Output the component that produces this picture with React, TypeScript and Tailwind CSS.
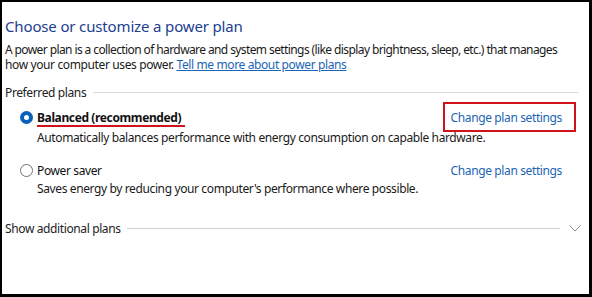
function Radio({ checked }: { checked?: boolean }) {
  if (checked) {
    return (
      <span className="flex h-[13px] w-[13px] shrink-0 items-center justify-center rounded-full bg-[#0a5fb8]">
        <span className="h-[5px] w-[5px] rounded-full bg-white" />
      </span>
    );
  }
  return <span className="h-[13px] w-[13px] shrink-0 rounded-full border border-[#707070] bg-white" />;
}

function Plan({
  name,
  desc,
  checked,
  highlight,
}: {
  name: string;
  desc: string;
  checked?: boolean;
  highlight?: boolean;
}) {
  return (
    <div className="flex flex-col">
      <div className="flex h-[22px] items-center pl-[15px] pr-[27px]">
        <Radio checked={checked} />
        <span className="relative ml-[4px] flex-1">
          <span className={checked ? "font-bold text-[#111]" : "text-[#111]"}>{name}</span>
          {highlight && (
            <span className="absolute left-0 top-[15px] h-[2px] w-[148px] bg-[#d0121b]" />
          )}
        </span>
        <span className="relative text-[#1b64b5]">
          Change plan settings
          {highlight && (
            <span className="absolute -bottom-[7px] -left-[8px] -right-[14px] -top-[8px] border-2 border-[#d0121b]" />
          )}
        </span>
      </div>
      <p className={checked ? "mt-[2px] pl-[32px] text-[#1a1a1a]" : "pl-[32px] text-[#1a1a1a]"}>{desc}</p>
    </div>
  );
}

export default function App() {
  return (
    <div
      className="h-[297px] w-[592px] border-b-[3px] border-l-2 border-r-[3px] border-t-2 border-black bg-white pl-[3px] text-[12px] leading-[15px] tracking-[-0.38px] text-[#1a1a1a]"
      style={{ fontFamily: '"Noto Sans", "Open Sans", sans-serif' }}
    >
      <h1 className="mt-[13px] text-[15px] font-normal leading-[22px] tracking-[-0.15px] text-[#213d8f]">
        Choose or customize a power plan
      </h1>
      <div className="mt-[5px] flex flex-col whitespace-nowrap">
        <p className="tracking-[-0.6px]">
          A power plan is a collection of hardware and system settings (like display brightness, sleep, etc.) that manages
        </p>
        <p>
          how your computer uses power.{" "}
          <a className="text-[#1b64b5] underline">Tell me more about power plans</a>
        </p>
      </div>

      <div className="mt-[13px] flex items-center pr-[11px]">
        <span className="text-[#222]">Preferred plans</span>
        <span className="ml-[7px] h-px flex-1 bg-[#d9d9d9]" />
      </div>

      <div className="mt-[6px] flex flex-col gap-[14px]">
        <Plan
          name="Balanced (recommended)"
          desc="Automatically balances performance with energy consumption on capable hardware."
          checked
          highlight
        />
        <Plan
          name="Power saver"
          desc="Saves energy by reducing your computer's performance where possible."
        />
      </div>

      <div className="mt-[25px] flex items-center pr-[8px]">
        <span className="text-[#222]">Show additional plans</span>
        <span className="ml-[6px] h-px flex-1 bg-[#d0d0d0]" />
        <svg className="ml-[9px]" width="12" height="7" viewBox="0 0 12 7" fill="none">
          <polyline points="0.5,0.5 6,6 11.5,0.5" stroke="#8c8c8c" strokeWidth="1" />
        </svg>
      </div>
    </div>
  );
}
